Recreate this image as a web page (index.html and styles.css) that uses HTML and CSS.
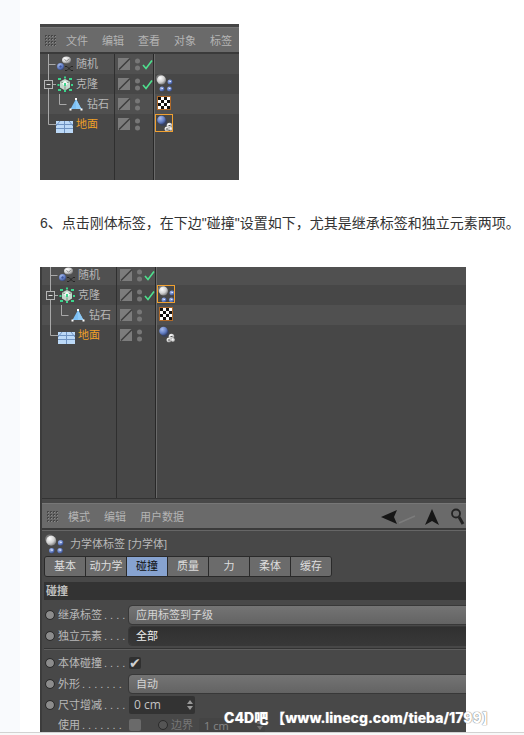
FILE: index.html
```
<!DOCTYPE html>
<html lang="zh-CN">
<head>
    <meta charset="UTF-8">
    <meta name="viewport" content="width=device-width, initial-scale=1.0">
    <title>C4D 动力学教程</title>
    <link rel="stylesheet" href="styles.css">
</head>
<body>
    <svg class="defs" width="0" height="0" aria-hidden="true">
        <defs>
            <radialGradient id="white-ball" cx="35%" cy="30%" r="75%">
                <stop offset="0" stop-color="#ffffff"/>
                <stop offset="0.6" stop-color="#cfcfcf"/>
                <stop offset="1" stop-color="#777777"/>
            </radialGradient>
            <radialGradient id="blue-ball" cx="35%" cy="30%" r="75%">
                <stop offset="0" stop-color="#a9bcec"/>
                <stop offset="0.6" stop-color="#6580c4"/>
                <stop offset="1" stop-color="#34457c"/>
            </radialGradient>
            <pattern id="grip-dots" width="3" height="3" patternUnits="userSpaceOnUse">
                <rect width="2" height="2" fill="#474747"/>
                <rect x="1" y="1" width="1" height="1" fill="#8a8a8a"/>
            </pattern>
        </defs>
        <symbol id="grip" viewBox="0 0 12 12">
            <rect width="12" height="12" fill="url(#grip-dots)"/>
        </symbol>
        <symbol id="node-random" viewBox="0 0 34 20">
            <path d="M8.5 0v20M8.5 10.5h7" stroke="#a8a8a8" fill="none"/>
            <ellipse cx="26.5" cy="6" rx="4.5" ry="3.5" fill="url(#white-ball)"/>
            <path d="M24.5 5.5l2 1.5 3-2" stroke="#888" fill="none"/>
            <circle cx="20.5" cy="12.5" r="3.5" fill="url(#blue-ball)"/>
            <circle cx="20.5" cy="12.5" r="1.2" fill="#3d56a0"/>
            <path d="M25 12.5h2l4 4h2M25 16.5h2l4-4h2" stroke="#262626" fill="none"/>
        </symbol>
        <symbol id="node-cloner" viewBox="0 0 34 20">
            <path d="M8.5 0v20M12 10.5h4" stroke="#a8a8a8" fill="none"/>
            <rect x="4.5" y="6.5" width="8" height="8" fill="#484848" stroke="#b5b5b5"/>
            <path d="M6.5 10.5h4" stroke="#ddd"/>
            <path d="M20 7.5l5-2.5 5 2.5v6l-5 3-5-3z" fill="#c3d8cc"/>
            <path d="M20 7.5l5 2 5-2M25 9.5v7" stroke="#79917f" fill="none"/>
            <path d="M22 9.5l3-3 3 3-3 3z" fill="#f3f7f4"/>
            <path d="M18 4h3v2h-3zM29 4h3v2h-3zM17.5 10h2v2h-2zM31 10h2v2h-2zM18 15h3v2h-3zM29 15h3v2h-3zM24 2.5h2v2h-2zM24 16h2v2h-2zM24 9h2v3h-2z" fill="#3bd68c"/>
        </symbol>
        <symbol id="node-diamond" viewBox="0 0 45 20">
            <path d="M8.5 0v20M19.5 0v10.5h7" stroke="#a8a8a8" fill="none"/>
            <path d="M36 5l5.500 10h-11z" fill="#7cc0f5"/>
            <path d="M36 5l5.500 10h-5.500z" fill="#8ecbf8"/>
            <path d="M35 4h2v2h-2zM29.500 14.500h2v2h-2zM40.500 14.500h2v2h-2z" fill="#fff"/>
        </symbol>
        <symbol id="node-floor" viewBox="0 0 34 20">
            <path d="M8.5 0v10.5h8" stroke="#a8a8a8" fill="none"/>
            <rect x="16" y="7" width="17" height="12" fill="#bcd9f7"/>
            <path d="M16 10.5h17M16 14.5h17M24.5 7v12M20 7l-4 5M29 7l4 5" stroke="#6f93c2" fill="none"/>
        </symbol>
        <symbol id="flags" viewBox="0 0 38 20">
            <rect x="3" y="4" width="12" height="12" fill="#7c7c7c"/>
            <path d="M4 15.5l11-11" stroke="#3d3d3d" stroke-width="1.5"/>
            <circle cx="22.500" cy="7" r="2.500" fill="#777"/>
            <circle cx="22.500" cy="14" r="2.500" fill="#777"/>
        </symbol>
        <symbol id="flags-on" viewBox="0 0 38 20">
            <use href="#flags" width="38" height="20"/>
            <path d="M28 11l3 3.5 6-8" stroke="#4ee08e" stroke-width="1.6" fill="none"/>
        </symbol>
        <symbol id="tag-rigid" viewBox="0 0 18 18">
            <circle cx="5" cy="4.5" r="4" fill="#777"/>
            <circle cx="6.5" cy="6" r="4.5" fill="url(#white-ball)"/>
            <circle cx="15" cy="8" r="2.5" fill="url(#blue-ball)"/>
            <circle cx="7" cy="15" r="2.5" fill="url(#blue-ball)"/>
            <circle cx="14.5" cy="15" r="2.5" fill="url(#blue-ball)"/>
            <path d="M14.5 7.500h1.500M6.500 14.500h1.500M14 14.500h1.500" stroke="#dfe7ff" fill="none"/>
        </symbol>
        <symbol id="tag-texture" viewBox="0 0 18 18">
            <rect x="2.5" y="2.5" width="13" height="13" fill="#fff" stroke="#b06a2a"/>
            <path d="M3 3h3v3H3zM9 3h3v3H9zM6 6h3v3H6zM12 6h3v3h-3zM3 9h3v3H3zM9 9h3v3H9zM6 12h3v3H6zM12 12h3v3h-3z" fill="#111"/>
        </symbol>
        <symbol id="tag-collider" viewBox="0 0 18 18">
            <circle cx="8" cy="8" r="4" fill="#39415a"/>
            <circle cx="6.5" cy="6" r="4.3" fill="url(#blue-ball)"/>
            <circle cx="14.5" cy="11.5" r="2.8" fill="url(#white-ball)"/>
            <circle cx="12" cy="15" r="2.5" fill="url(#white-ball)"/>
            <circle cx="16" cy="15" r="2" fill="url(#white-ball)"/>
            <path d="M13.5 11.5h2M11 15h2" stroke="#555"/>
        </symbol>
    </svg>

    <main class="article">
        <section class="shot shot-small">
            <div class="menubar">
                <svg class="grip"><use href="#grip"/></svg>
                <button>文件</button>
                <button>编辑</button>
                <button>查看</button>
                <button>对象</button>
                <button>标签</button>
            </div>
            <div class="tree">
                <div class="node">
                    <div class="name"><svg class="branch"><use href="#node-random"/></svg>随机</div>
                    <div class="flags"><svg><use href="#flags-on"/></svg></div>
                    <div class="tags"></div>
                </div>
                <div class="node">
                    <div class="name"><svg class="branch"><use href="#node-cloner"/></svg>克隆</div>
                    <div class="flags"><svg><use href="#flags-on"/></svg></div>
                    <div class="tags"><svg class="tag"><use href="#tag-rigid"/></svg></div>
                </div>
                <div class="node">
                    <div class="name"><svg class="branch child"><use href="#node-diamond"/></svg>钻石</div>
                    <div class="flags"><svg><use href="#flags"/></svg></div>
                    <div class="tags"><svg class="tag"><use href="#tag-texture"/></svg></div>
                </div>
                <div class="node selected">
                    <div class="name"><svg class="branch"><use href="#node-floor"/></svg>地面</div>
                    <div class="flags"><svg><use href="#flags"/></svg></div>
                    <div class="tags"><svg class="tag active"><use href="#tag-collider"/></svg></div>
                </div>
                <div class="node rest">
                    <div class="name"></div>
                    <div class="flags"></div>
                    <div class="tags"></div>
                </div>
            </div>
        </section>

        <p class="step">6、点击刚体标签，在下边"碰撞"设置如下，尤其是继承标签和独立元素两项。</p>

        <section class="shot shot-large">
            <div class="tree">
                <div class="node cut">
                    <div class="name"><svg class="branch"><use href="#node-random"/></svg>随机</div>
                    <div class="flags"><svg><use href="#flags-on"/></svg></div>
                    <div class="tags"></div>
                </div>
                <div class="node">
                    <div class="name"><svg class="branch"><use href="#node-cloner"/></svg>克隆</div>
                    <div class="flags"><svg><use href="#flags-on"/></svg></div>
                    <div class="tags"><svg class="tag active"><use href="#tag-rigid"/></svg></div>
                </div>
                <div class="node">
                    <div class="name"><svg class="branch child"><use href="#node-diamond"/></svg>钻石</div>
                    <div class="flags"><svg><use href="#flags"/></svg></div>
                    <div class="tags"><svg class="tag"><use href="#tag-texture"/></svg></div>
                </div>
                <div class="node selected">
                    <div class="name"><svg class="branch"><use href="#node-floor"/></svg>地面</div>
                    <div class="flags"><svg><use href="#flags"/></svg></div>
                    <div class="tags"><svg class="tag"><use href="#tag-collider"/></svg></div>
                </div>
                <div class="node rest tall">
                    <div class="name"></div>
                    <div class="flags"></div>
                    <div class="tags"></div>
                </div>
            </div>

            <div class="menubar">
                <svg class="grip"><use href="#grip"/></svg>
                <button>模式</button>
                <button>编辑</button>
                <button>用户数据</button>
                <svg class="tools" viewBox="0 0 86 20">
                    <path d="M1 10l16-7-3 7 3 7z" fill="#161616"/>
                    <path d="M19 16l16-7" stroke="#7c7c7c" stroke-width="1.5"/>
                    <path d="M52 2l7 16-7-4-7 4z" fill="#161616"/>
                    <circle cx="76" cy="6.5" r="4" fill="none" stroke="#222" stroke-width="1.8"/>
                    <path d="M79 10l4 7" stroke="#222" stroke-width="3"/>
                </svg>
            </div>

            <div class="attributes">
                <div class="title">
                    <svg class="title-icon"><use href="#tag-rigid"/></svg>
                    力学体标签 [力学体]
                </div>
                <div class="tabs">
                    <button>基本</button>
                    <button>动力学</button>
                    <button class="current">碰撞</button>
                    <button>质量</button>
                    <button>力</button>
                    <button>柔体</button>
                    <button>缓存</button>
                </div>
                <h2>碰撞</h2>
                <div class="field">
                    <i class="key"></i>
                    <label for="inherit">继承标签</label>
                    <select id="inherit"><option>应用标签到子级</option></select>
                </div>
                <div class="field">
                    <i class="key"></i>
                    <label for="elements">独立元素</label>
                    <select id="elements" class="dark"><option>全部</option></select>
                </div>
                <hr>
                <div class="field">
                    <i class="key"></i>
                    <label for="self">本体碰撞</label>
                    <input type="checkbox" id="self" checked>
                </div>
                <div class="field">
                    <i class="key"></i>
                    <label for="shape">外形</label>
                    <select id="shape"><option>自动</option></select>
                </div>
                <div class="field">
                    <i class="key"></i>
                    <label for="size">尺寸增减</label>
                    <span class="number">
                        <input type="text" id="size" value="0 cm">
                        <svg viewBox="0 0 6 10"><path d="M3 0l3 4H0zM3 10l3-4H0z" fill="#999"/></svg>
                    </span>
                </div>
                <div class="field last">
                    <i class="key hidden"></i>
                    <label for="use">使用</label>
                    <input type="checkbox" id="use" class="off">
                    <i class="key dim"></i>
                    <label for="margin" class="short">边界</label>
                    <span class="number dim">
                        <input type="text" id="margin" value="1 cm" disabled>
                        <svg viewBox="0 0 6 10"><path d="M3 0l3 4H0zM3 10l3-4H0z" fill="#999"/></svg>
                    </span>
                </div>
            </div>
            <div class="watermark">C4D吧 【www.linecg.com/tieba/1799】</div>
        </section>
    </main>
    <footer></footer>
</body>
</html>
```
FILE: styles.css
```
* {
    box-sizing: border-box;
}
body {
    margin: 0;
    background-color: #f9fafd;
    font-family: "Liberation Sans", "Noto Sans CJK SC", sans-serif;
    font-size: 14px;
    color: #333;
    overflow: hidden;
}
button, select, input {
    font-family: inherit;
    font-size: 11px;
    margin: 0;
    padding: 0;
    border: none;
    border-radius: 0;
    background: none;
    color: inherit;
    appearance: none;
}
svg {
    display: block;
    flex: none;
}
.defs {
    position: absolute;
}
.article {
    margin-left: 20px;
    padding: 24px 0 0 20px;
    background-color: #fff;
}
.step {
    margin: 32px 0;
    line-height: 23px;
    white-space: nowrap;
}
footer {
    height: 3px;
    border-top: 1px solid #d2d2d2;
    background-color: #f8f8f8;
}

/* C4D panels */
.shot {
    position: relative;
    background-color: #484848;
    color: #b8b8b8;
    font-size: 11px;
    line-height: 20px;
}
.shot-small {
    max-width: 199px;
    border-top: 3px solid #454545;
}
.shot-large {
    max-width: 426px;
    border-left: 2px solid #3c3c3c;
}
.menubar {
    display: flex;
    align-items: center;
    gap: 14px;
    height: 27px;
    padding: 2px 0 0 5px;
    background-color: #6a6a6a;
    border-top: 1px solid #777;
    border-bottom: 2px solid #3a3a3a;
}
.menubar button {
    line-height: 20px;
    color: #b4b4b4;
}
.grip {
    width: 12px;
    height: 12px;
    margin-right: -5px;
}
.tools {
    width: 86px;
    height: 20px;
    margin-left: auto;
}

/* object tree */
.node {
    display: grid;
    grid-template-columns: 75px 39px 1fr;
    height: 20px;
    background-color: #474747;
}
.node:nth-child(odd) {
    background-color: #505050;
}
.node.rest {
    height: 46px;
    background-color: #474747;
}
.node.rest.tall {
    height: 154px;
    border-bottom: 1px solid #333;
}
.node.cut {
    height: 18px;
    grid-template-rows: 20px;
    align-content: end;
    overflow: hidden;
}
.name {
    display: flex;
    gap: 2px;
    border-right: 1px solid #2f2f2f;
}
.branch {
    width: 34px;
    height: 20px;
}
.branch.child {
    width: 45px;
}
.flags {
    border-right: 1px solid #282828;
}
.flags svg {
    width: 38px;
    height: 20px;
}
.tags {
    border-left: 1px solid #6a6a6a;
}
.tag {
    width: 18px;
    height: 18px;
}
.tag.active {
    outline: 1px solid #f0a030;
    outline-offset: -1px;
}
.selected .name {
    color: #f0a028;
}

/* attribute manager */
.shot-large .menubar {
    margin-top: 4px;
}
.attributes {
    border-top: 1px solid #666;
    padding-left: 2px;
    overflow: hidden;
}
.title {
    display: flex;
    align-items: center;
    gap: 6px;
    height: 25px;
}
.title-icon {
    width: 20px;
    height: 20px;
}
.tabs {
    display: flex;
    width: 288px;
    border: 1px solid #2a2a2a;
    border-radius: 3px;
    overflow: hidden;
}
.tabs button {
    flex: 1;
    height: 19px;
    line-height: 19px;
    background-color: #6b6b6b;
    color: #ddd;
    border-right: 1px solid #2a2a2a;
}
.tabs button:last-child {
    border-right: none;
}
.tabs button.current {
    background-color: #87a3d0;
    color: #111;
}
h2 {
    margin: 5px 0 4px;
    padding-left: 2px;
    font-size: 11px;
    line-height: 18px;
    background-color: #333;
    color: #c0c0c0;
}
.field {
    display: flex;
    align-items: center;
    height: 21px;
}
.key {
    width: 8px;
    height: 8px;
    margin: 0 4px 0 2px;
    border-radius: 50%;
    background-color: #8c8c8c;
    outline: 1px solid #2c2c2c;
}
.key.hidden {
    visibility: hidden;
}
.key.dim {
    margin-left: 18px;
    background-color: #555;
}
.field label {
    flex: none;
    display: flex;
    width: 67px;
    margin-right: 4px;
    overflow: hidden;
    white-space: nowrap;
}
.field label::after {
    content: " . . . . . . . . . . .";
    margin-left: 2px;
}
.field label.short {
    width: 22px;
    margin-right: 6px;
    color: #777;
}
.field select {
    flex: 1;
    height: 18px;
    padding-left: 7px;
    line-height: 18px;
    background-image: linear-gradient(#747474, #636363);
    color: #d4d4d4;
    border-radius: 3px 0 0 3px;
    outline: 1px solid #383838;
}
.field select.dark {
    background-image: linear-gradient(#303030, #383838);
    color: #eee;
}
hr {
    margin: 2px 0;
    border: none;
    border-top: 1px solid #333;
    border-bottom: 1px solid #5e5e5e;
}
.field input[type="checkbox"] {
    width: 12px;
    height: 12px;
    background-color: #303030;
    border-radius: 2px;
}
.field input[type="checkbox"]:checked::before {
    content: "✔";
    display: block;
    font: 14px/12px "DejaVu Sans", sans-serif;
    color: #d0d0d0;
}
.field input[type="checkbox"].off {
    background-color: #6a6a6a;
}
.number {
    display: flex;
    align-items: center;
    width: 66px;
    height: 18px;
    padding: 0 2px 0 5px;
    background-color: #333;
    border-radius: 2px;
}
.number input {
    flex: 1;
    min-width: 0;
    font-family: "Open Sans", sans-serif;
    font-size: 12px;
    color: #c4c4c4;
}
.number svg {
    width: 6px;
    height: 10px;
}
.field.last {
    height: 17px;
    padding-top: 3px;
    line-height: 14px;
}
.number.dim {
    height: 14px;
    background-color: #424242;
    opacity: 0.5;
}
.number.dim input {
    height: 14px;
    font-size: 11px;
}
.watermark {
    position: absolute;
    left: 182px;
    bottom: 4px;
    font-family: Inter, "Noto Sans CJK SC", sans-serif;
    font-size: 14px;
    font-weight: 800;
    white-space: nowrap;
    color: #fff;
    text-shadow: 0 0 1px #777, 0 0 1px #777;
}
```
